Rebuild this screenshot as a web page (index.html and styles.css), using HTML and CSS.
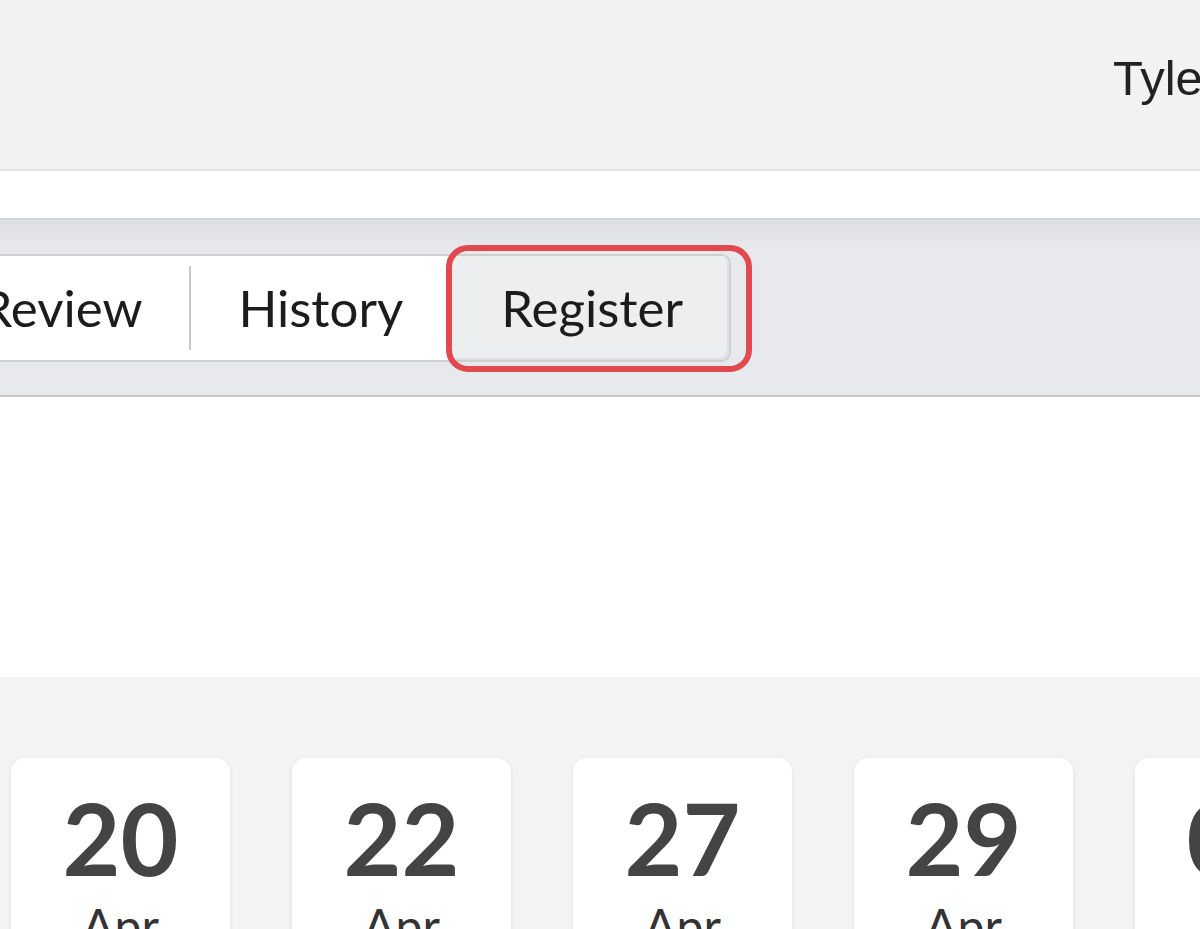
FILE: index.html
```html
<!DOCTYPE html>
<html>
<head>
    <title>Register</title>
    <link rel="stylesheet" href="styles.css">
</head>
<body>
    <div class="header">
        <div class="user">Tyler Smith</div>
    </div>

    <div class="strip"></div>

    <div class="tab-bar">
        <div class="tabs">
            <div class="tab-group">
                <div class="tab">Overview</div>
                <div class="divider"></div>
                <div class="tab">Review</div>
                <div class="divider"></div>
                <div class="tab">History</div>
                <div class="tab active">Register</div>
            </div>
        </div>
    </div>

    <div class="blank"></div>

    <div class="dates">
        <div class="date-card">
            <div class="day">20</div>
            <div class="month">Apr</div>
        </div>
        <div class="date-card">
            <div class="day">22</div>
            <div class="month">Apr</div>
        </div>
        <div class="date-card">
            <div class="day">27</div>
            <div class="month">Apr</div>
        </div>
        <div class="date-card">
            <div class="day">29</div>
            <div class="month">Apr</div>
        </div>
        <div class="date-card">
            <div class="day">04</div>
            <div class="month">May</div>
        </div>
    </div>
</body>
</html>
```

FILE: styles.css
```css
:root {
    --header: #f2f2f2;
    --bar: #e8e9ec;
    --line: #cfcfcf;
    --text: #1c1c1c;
    --date: #444444;
    --mark: #e2494f;
}

html, body {
    overflow: hidden;
}

body {
    margin: 0;
    width: 1200px;
    height: 929px;
    font-family: Lato, 'Open Sans', Arial, sans-serif;
    color: var(--text);
    background: #fff;
}

.header {
    height: 169px;
    background: var(--header);
    border-bottom: 2px solid #e2e2e2;
    display: flex;
    justify-content: flex-end;
}

.user {
    flex: 0 0 87px;
    min-width: 0;
    padding-top: 50px;
    font-family: 'Liberation Sans', Arial, sans-serif;
    font-size: 49px;
    line-height: 56px;
    white-space: nowrap;
    color: #222;
}

.strip {
    height: 47px;
    background: #fff;
}

.tab-bar {
    background: linear-gradient(180deg, #dedfe3 0%, var(--bar) 30px, var(--bar) 100%);
    border-top: 2px solid #d3d4d7;
    border-bottom: 2px solid #c9c9c9;
    padding: 34px 0 33px;
}

.tabs {
    width: 731px;
    display: flex;
    justify-content: flex-end;
}

.tab-group {
    flex-shrink: 0;
    display: flex;
    align-items: center;
    background: #fff;
    border: 2px solid var(--line);
    border-left: none;
    border-radius: 0 10px 10px 0;
}

.tab {
    padding: 22px 47px;
    font-size: 51px;
    line-height: 60px;
    white-space: nowrap;
}

.divider {
    width: 2px;
    height: 84px;
    background: #c9c9c9;
}

.tab.active {
    position: relative;
    align-self: stretch;
    padding: 22px 46px 22px 51px;
    background: #eceef0;
    border-radius: 0 8px 8px 0;
    box-shadow: inset -2px -2px 0 #dfdfe1;
}

.tab.active::after {
    content: "";
    position: absolute;
    left: -4px;
    right: -23px;
    top: -11px;
    bottom: -12px;
    border: 6px solid var(--mark);
    border-radius: 22px;
}

.blank {
    height: 280px;
}

.dates {
    background: #f3f3f3;
    height: 253px;
    padding: 81px 0 0 11px;
    box-sizing: border-box;
    display: flex;
    gap: 62px;
}

.date-card {
    flex: 0 0 219px;
    height: 300px;
    background: #fff;
    border-radius: 14px;
    box-shadow: 0 1px 4px rgba(0,0,0,0.08);
    text-align: center;
    padding-top: 19px;
    box-sizing: border-box;
}

.day {
    font-size: 100px;
    font-weight: 700;
    line-height: 120px;
    color: var(--date);
}

.month {
    font-size: 48px;
    line-height: 58px;
    color: #333;
}
```
